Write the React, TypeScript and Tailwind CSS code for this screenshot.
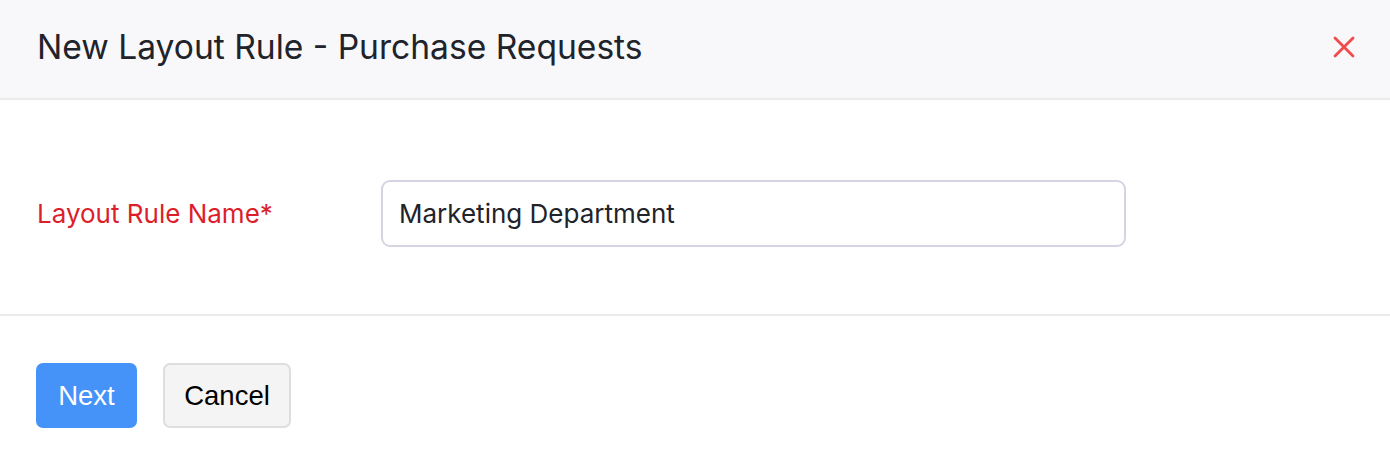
import React from "react";

export default function App() {
  return (
    <div className="w-[1390px] h-[468px] bg-white" style={{ fontFamily: "Inter, 'Noto Sans', sans-serif" }}>
      <div className="h-[100px] bg-[#f8f8fa] border-b-2 border-[#ebebeb] flex items-center justify-between pl-[37px] pr-[34px] pb-[4px]">
        <h1 className="text-[33.6px] text-[#21232b] leading-none">New Layout Rule - Purchase Requests</h1>
        <button className="w-[24px] h-[24px] flex items-center justify-center">
          <svg width="22" height="22" viewBox="0 0 22 22" fill="none" stroke="#f24a4a" strokeWidth="2.8" strokeLinecap="round">
            <path d="M2 2 L20 20 M20 2 L2 20" />
          </svg>
        </button>
      </div>
      <div className="h-[216px] border-b-2 border-[#ebebeb] flex items-start pl-[37px] pt-[80px]">
        <label className="w-[344px] text-[26px] text-[#dc1e2b] leading-[67px]">Layout Rule Name*</label>
        <div className="w-[745px] h-[67px] border-2 border-[#d6d4e3] rounded-[9px] flex items-center px-[16px]">
          <span className="text-[26px] text-[#21232b]">Marketing Department</span>
        </div>
      </div>
      <div className="flex items-start gap-[26px] pl-[36px] pt-[47px]" style={{ fontFamily: "'Liberation Sans', Arial, sans-serif" }}>
        <button className="w-[101px] h-[65px] rounded-[7px] bg-[#4592f9] text-white text-[27.5px]">Next</button>
        <button className="w-[128px] h-[65px] rounded-[7px] bg-[#f4f4f4] border-2 border-[#dedede] text-black text-[27.5px]">Cancel</button>
      </div>
    </div>
  );
}
